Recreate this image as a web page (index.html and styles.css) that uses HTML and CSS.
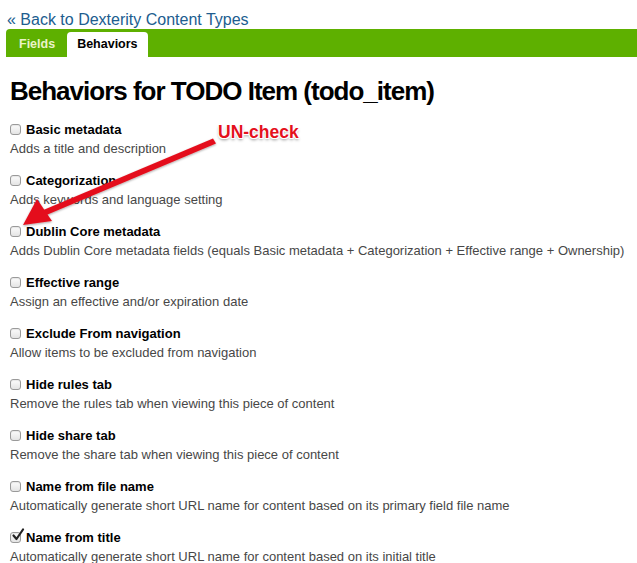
FILE: index.html
```html
<!DOCTYPE html>
<html>
<head>
<meta charset="utf-8">
<link rel="stylesheet" href="styles.css">
</head>
<body>
<div class="page">
  <a class="back" href="#">« Back to Dexterity Content Types</a>
  <div class="tabs">
    <span class="tab">Fields</span>
    <span class="tab active">Behaviors</span>
  </div>
  <h1 class="title">Behaviors for TODO Item (todo_item)</h1>
  <div class="list">
    <div class="item"><div class="label"><span class="cb"></span>Basic metadata</div><div class="desc">Adds a title and description</div></div>
    <div class="item"><div class="label"><span class="cb"></span>Categorization</div><div class="desc">Adds keywords and language setting</div></div>
    <div class="item"><div class="label"><span class="cb"></span>Dublin Core metadata</div><div class="desc">Adds Dublin Core metadata fields (equals Basic metadata + Categorization + Effective range + Ownership)</div></div>
    <div class="item"><div class="label"><span class="cb"></span>Effective range</div><div class="desc">Assign an effective and/or expiration date</div></div>
    <div class="item"><div class="label"><span class="cb"></span>Exclude From navigation</div><div class="desc">Allow items to be excluded from navigation</div></div>
    <div class="item"><div class="label"><span class="cb"></span>Hide rules tab</div><div class="desc">Remove the rules tab when viewing this piece of content</div></div>
    <div class="item"><div class="label"><span class="cb"></span>Hide share tab</div><div class="desc">Remove the share tab when viewing this piece of content</div></div>
    <div class="item"><div class="label"><span class="cb"></span>Name from file name</div><div class="desc">Automatically generate short URL name for content based on its primary field file name</div></div>
    <div class="item"><div class="label"><span class="cb checked"><svg viewBox="0 0 14 14" width="14" height="14"><path d="M2.5 7.5 L5.5 11 L12 1.5" fill="none" stroke="#222" stroke-width="2.2" stroke-linecap="round" stroke-linejoin="round"/></svg></span>Name from title</div><div class="desc">Automatically generate short URL name for content based on its initial title</div></div>
  </div>
  <div class="note">UN-check</div>
  <svg class="arrow" width="637" height="563" viewBox="0 0 637 563">
    <defs>
      <filter id="sh" x="-10%" y="-10%" width="120%" height="120%">
        <feDropShadow dx="0" dy="1" stdDeviation="1" flood-color="#000" flood-opacity="0.35"/>
      </filter>
    </defs>
    <g filter="url(#sh)" fill="#e4101c" stroke="none">
      <path d="M213 138.5 L216 143.5 L44 216 L41 211 Z"/>
      <path d="M23 225 L37 199 L52 221 Z"/>
    </g>
  </svg>
</div>
</body>
</html>
```
FILE: styles.css
```css
html, body {
  margin: 0;
  padding: 0;
  background: #fff;
}
body {
  font-family: "Liberation Sans", Arial, sans-serif;
  color: #000;
}
.page {
  position: relative;
  width: 637px;
  height: 563px;
  overflow: hidden;
}
.back {
  display: block;
  margin: 10px 0 0 7px;
  font-size: 16px;
  line-height: 19px;
  color: #205d8f;
  text-decoration: none;
}
.tabs {
  display: flex;
  align-items: flex-end;
  gap: 12px;
  margin: 0 0 0 6px;
  padding-left: 13px;
  height: 28px;
  background: #5eb000;
  border-top-left-radius: 4px;
}
.tab {
  font-size: 12.5px;
  font-weight: bold;
  color: #eaf3c8;
  line-height: 25px;
}
.tab.active {
  background: #fff;
  color: #000;
  padding: 0 10px;
  border-radius: 4px 4px 0 0;
}
.title {
  margin: 19px 0 0 10px;
  font-size: 26px;
  line-height: 30px;
  letter-spacing: -1px;
  font-weight: bold;
}
.list {
  display: flex;
  flex-direction: column;
  gap: 13px;
  margin: 14px 0 0 10px;
}
.item {
  display: flex;
  flex-direction: column;
}
.label {
  display: flex;
  align-items: center;
  gap: 5px;
  font-size: 13px;
  font-weight: bold;
  line-height: 19px;
}
.cb {
  position: relative;
  display: inline-block;
  width: 9px;
  height: 9px;
  border: 1px solid #9a9a9a;
  border-radius: 3px;
  background: linear-gradient(#fcfcfc, #e4e4e4);
  box-shadow: inset 0 1px 1px rgba(0,0,0,0.08);
}
.cb.checked svg {
  position: absolute;
  left: 0;
  top: -5px;
}
.desc {
  font-size: 13px;
  line-height: 19px;
  color: #474747;
}
.note {
  position: absolute;
  left: 218px;
  top: 122px;
  font-size: 17.5px;
  font-weight: bold;
  color: #e4101c;
  line-height: 20px;
  text-shadow: -1px -1px 0 #fff, 1px -1px 0 #fff, -1px 1px 0 #fff, 1px 1px 0 #fff, 0 2px 3px rgba(0,0,0,0.45);
}
.arrow {
  position: absolute;
  left: 0;
  top: 0;
  pointer-events: none;
}
```
